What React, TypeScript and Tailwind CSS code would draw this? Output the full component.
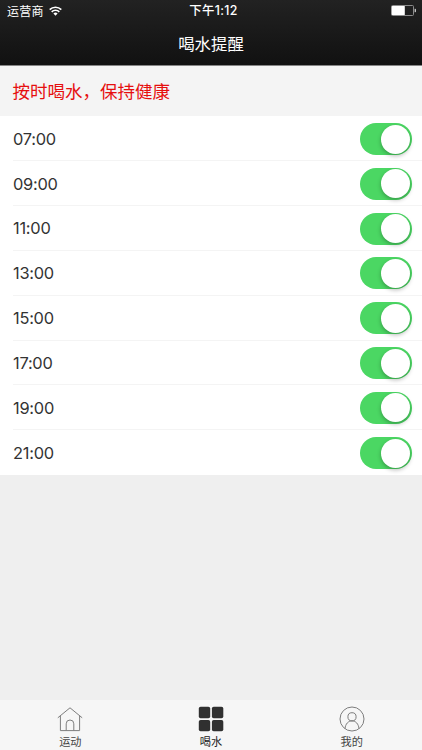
import { useState } from 'react';

type TabKey = 'sport' | 'water' | 'mine';

const TIMES = ['07:00', '09:00', '11:00', '13:00', '15:00', '17:00', '19:00', '21:00'];

function WifiIcon() {
  return (
    <svg className="w-[13px] h-[10px] mb-px" viewBox="0 0 13 10" fill="none" stroke="#fff" strokeWidth="1.7">
      <path d="M0.7 3.6a8.3 8.3 0 0 1 11.6 0" />
      <path d="M2.7 5.8a5.4 5.4 0 0 1 7.6 0" />
      <path d="M6.5 9.8 4.4 7.6a3 3 0 0 1 4.2 0z" fill="#fff" stroke="none" />
    </svg>
  );
}

function BatteryIcon() {
  return (
    <svg className="w-[26px] h-[11px] mb-px" viewBox="0 0 26 11">
      <rect x="0.5" y="0.5" width="22" height="10" rx="1" fill="none" stroke="#8c8c8c" />
      <rect x="0.8" y="1" width="13" height="9" rx="0.5" fill="#fff" />
      <path d="M23.6 3.8h0.6a0.8 0.8 0 0 1 0.8 0.8v1.8a0.8 0.8 0 0 1-0.8 0.8h-0.6z" fill="#c4c4c4" />
    </svg>
  );
}

function HomeIcon() {
  return (
    <svg className="w-[26px] h-[26px]" viewBox="0 0 26 26" fill="none" stroke="#7d7d7d" strokeWidth="1">
      <path d="M0.8 11.8 13 1.8l12.2 10" />
      <path d="M3.4 9.8v14.8h19.2V9.8" />
      <path d="M9.2 24.6v-6.8a3.8 3.8 0 0 1 7.6 0v6.8" />
    </svg>
  );
}

function GridIcon() {
  return (
    <svg className="w-[26px] h-[26px]" viewBox="0 0 26 26" fill="#303030">
      <rect x="0.8" y="0.8" width="11.4" height="11.4" rx="1.8" />
      <rect x="13.9" y="0.8" width="11.4" height="11.4" rx="1.8" />
      <rect x="0.8" y="13.9" width="11.4" height="11.4" rx="1.8" />
      <rect x="13.9" y="13.9" width="11.4" height="11.4" rx="1.8" />
    </svg>
  );
}

function UserIcon() {
  return (
    <svg className="w-[26px] h-[26px]" viewBox="0 0 26 26" fill="none" stroke="#7d7d7d" strokeWidth="1">
      <circle cx="13" cy="13" r="12" />
      <circle cx="13" cy="10.8" r="4.1" />
      <path d="M6 22.6c0.5-4.7 3.2-7.7 7-7.7s6.5 3 7 7.7" />
    </svg>
  );
}

const TABS = [
  { key: 'sport', label: '运动', icon: <HomeIcon /> },
  { key: 'water', label: '喝水', icon: <GridIcon /> },
  { key: 'mine', label: '我的', icon: <UserIcon /> },
] as const;

function Toggle({ label, on, onChange }: { label: string; on: boolean; onChange: () => void }) {
  return (
    <button
      role="switch"
      aria-checked={on}
      aria-label={label}
      onClick={onChange}
      className={`w-[52px] h-[32px] rounded-full p-[1.5px] flex items-center transition-colors ${
        on ? 'bg-[#4bd763] justify-end' : 'bg-[#e5e5e5] justify-start'
      }`}
    >
      <span className="size-[29px] rounded-full bg-white shadow-[0_2px_4px_rgba(0,0,0,0.28)]" />
    </button>
  );
}

function App() {
  const [enabled, setEnabled] = useState<boolean[]>(TIMES.map(() => true));
  const [activeTab, setActiveTab] = useState<TabKey>('water');

  const toggle = (index: number) => {
    setEnabled((prev) => prev.map((value, i) => (i === index ? !value : value)));
  };

  return (
    <div className="h-screen flex flex-col overflow-hidden bg-[#efefef] font-['Inter','Noto_Sans_CJK_SC',sans-serif]">
      {/* Status bar + title */}
      <header className="h-[66px] shrink-0 border-b border-[#858585] bg-linear-to-b from-[#222] to-[#111] text-white">
        <div className="h-[22px] grid grid-cols-3 items-center pl-[7px] pr-[5px] text-[12px]">
          <div className="flex items-center gap-[5px]">
            <span className="pt-px tracking-[0.3px]">运营商</span>
            <WifiIcon />
          </div>
          <span className="pt-px pl-[3px] text-center text-[12.4px] font-medium tracking-[0.3px]">下午1:12</span>
          <div className="flex justify-end">
            <BatteryIcon />
          </div>
        </div>
        <h1 className="h-[43px] pt-px flex items-center justify-center text-[16.4px]">喝水提醒</h1>
      </header>

      {/* Reminder list */}
      <main className="flex-1">
        <h2 className="h-[50px] pt-0.5 flex items-center pl-[12.5px] bg-[#f4f4f4] text-[17.5px] text-[#e60f0f]">
          按时喝水，保持健康
        </h2>
        <ul className="bg-white pt-[0.6px]">
          {TIMES.map((time, index) => (
            <li key={time} className="h-[44.8px] pl-[13px]">
              <div
                className={`h-full flex items-center justify-between pt-[1.2px] pr-[10.5px] ${
                  index < TIMES.length - 1 ? 'border-b border-[#f4f4f4]' : ''
                }`}
              >
                <span className="text-[16.4px] tracking-[-0.25px] text-[#333]">{time}</span>
                <Toggle label={time} on={enabled[index]} onChange={() => toggle(index)} />
              </div>
            </li>
          ))}
        </ul>
      </main>

      {/* Tab bar */}
      <nav className="h-[50px] shrink-0 grid grid-cols-3 bg-[#f6f6f6]">
        {TABS.map((tab) => (
          <button
            key={tab.key}
            onClick={() => setActiveTab(tab.key)}
            className={`flex flex-col items-center pt-[6px] text-[11.2px] leading-[20px] ${
              activeTab === tab.key ? 'text-[#222]' : 'text-[#444]'
            }`}
          >
            {tab.icon}
            <span>{tab.label}</span>
          </button>
        ))}
      </nav>
    </div>
  );
}

export default App;
